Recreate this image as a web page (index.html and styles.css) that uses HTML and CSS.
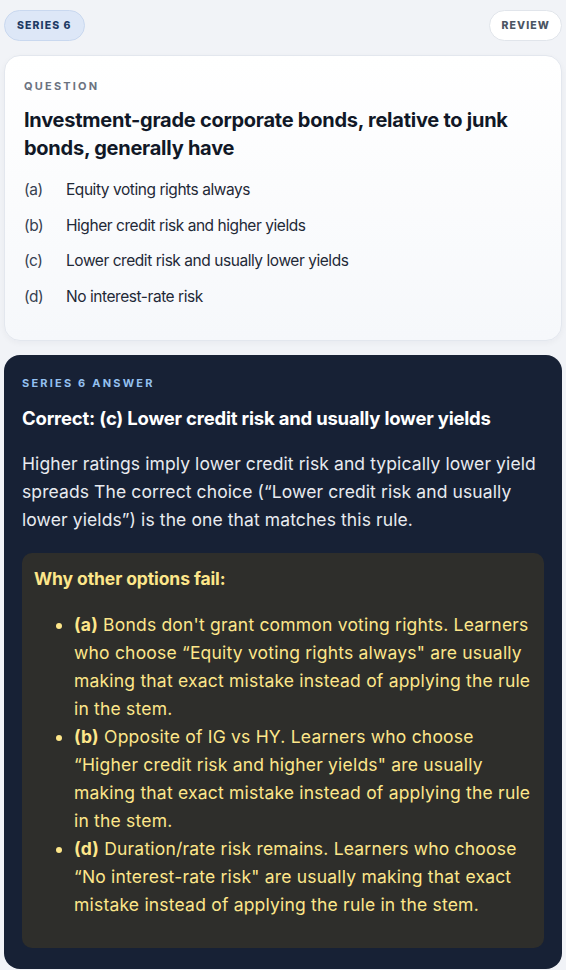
FILE: index.html
```html
<!DOCTYPE html>
<html lang="en">
<head>
  <meta charset="UTF-8">
  <meta name="viewport" content="width=device-width, initial-scale=1.0">
  <title>Series 6 Review</title>
  <link rel="stylesheet" href="styles.css">
</head>
<body>

  <div class="top-bar">
    <span class="pill pill-series">SERIES 6</span>
    <span class="pill pill-review">REVIEW</span>
  </div>

  <div class="question-card">
    <div class="label">QUESTION</div>
    <h2 class="question-title">Investment-grade corporate bonds, relative to junk bonds, generally have</h2>
    <div class="options">
      <div class="option"><span class="opt-key">(a)</span><span>Equity voting rights always</span></div>
      <div class="option"><span class="opt-key">(b)</span><span>Higher credit risk and higher yields</span></div>
      <div class="option"><span class="opt-key">(c)</span><span>Lower credit risk and usually lower yields</span></div>
      <div class="option"><span class="opt-key">(d)</span><span>No interest-rate risk</span></div>
    </div>
  </div>

  <div class="answer-card">
    <div class="label label-answer">SERIES 6 ANSWER</div>
    <div class="correct">Correct: (c) Lower credit risk and usually lower yields</div>
    <p class="explain">Higher ratings imply lower credit risk and typically lower yield spreads The correct choice (“Lower credit risk and usually lower yields”) is the one that matches this rule.</p>

    <div class="why-box">
      <div class="why-title">Why other options fail:</div>
      <ul>
        <li><b>(a)</b> Bonds don't grant common voting rights. Learners who choose “Equity voting rights always" are usually making that exact mistake instead of applying the rule in the stem.</li>
        <li><b>(b)</b> Opposite of IG vs HY. Learners who choose “Higher credit risk and higher yields" are usually making that exact mistake instead of applying the rule in the stem.</li>
        <li><b>(d)</b> Duration/rate risk remains. Learners who choose “No interest-rate risk" are usually making that exact mistake instead of applying the rule in the stem.</li>
      </ul>
    </div>
  </div>

</body>
</html>
```

FILE: styles.css
```css
body {
  font-family: Inter, "Liberation Sans", sans-serif;
  background-color: #f1f3f7;
  margin: 0;
  padding: 10px 4px 0;
}

.top-bar {
  display: flex;
  justify-content: space-between;
  align-items: center;
}

.pill {
  display: inline-flex;
  align-items: center;
  height: 29px;
  padding: 0 11px;
  border-radius: 16px;
  font-size: 10.5px;
  font-weight: 800;
  letter-spacing: 1.1px;
}

.pill-series {
  padding: 0 12px;
  background-color: #dde7f7;
  border: 1px solid #c9d8ef;
  color: #1e3a64;
}

.pill-review {
  background-color: #ffffff;
  border: 1px solid #e1e5eb;
  color: #4b5563;
}

.question-card {
  margin-top: 14px;
  background: linear-gradient(180deg, #ffffff 0%, #f6f8fb 100%);
  border: 1px solid #e3e7ee;
  border-radius: 16px;
  padding: 23px 19px 25px;
  box-shadow: 0 2px 6px rgba(15, 23, 42, 0.04);
}

.label {
  font-size: 11px;
  font-weight: 700;
  letter-spacing: 2.2px;
  color: #6b7280;
}

.question-title {
  margin: 13px 0 10px;
  font-size: 20px;
  line-height: 28px;
  font-weight: 700;
  letter-spacing: -0.25px;
  color: #111827;
}

.option {
  display: flex;
  font-size: 15.5px;
  line-height: 24px;
  letter-spacing: -0.45px;
  color: #1f2937;
  padding: 5.9px 0;
}

.opt-key {
  width: 42px;
  color: #374151;
  flex-shrink: 0;
}

.answer-card {
  margin-top: 14px;
  background-color: #172135;
  border-radius: 16px;
  padding: 21px 18px 21px;
}

.label-answer {
  color: #93c0f0;
}

.correct {
  margin-top: 17px;
  font-size: 18.5px;
  font-weight: 700;
  letter-spacing: -0.2px;
  color: #ffffff;
}

.explain {
  margin: 21px 0 19px;
  font-size: 17.5px;
  line-height: 28px;
  letter-spacing: 0.1px;
  color: #e8ebf0;
}

.why-box {
  background-color: #2e2e2b;
  border-radius: 10px;
  padding: 12px 12px 13px;
  color: #fde68a;
  font-size: 17.5px;
  line-height: 28px;
  letter-spacing: 0.2px;
}

.why-title {
  font-weight: 700;
  letter-spacing: -0.1px;
}

.why-box ul {
  margin: 18px 0 16px;
  padding-left: 40px;
}
```
